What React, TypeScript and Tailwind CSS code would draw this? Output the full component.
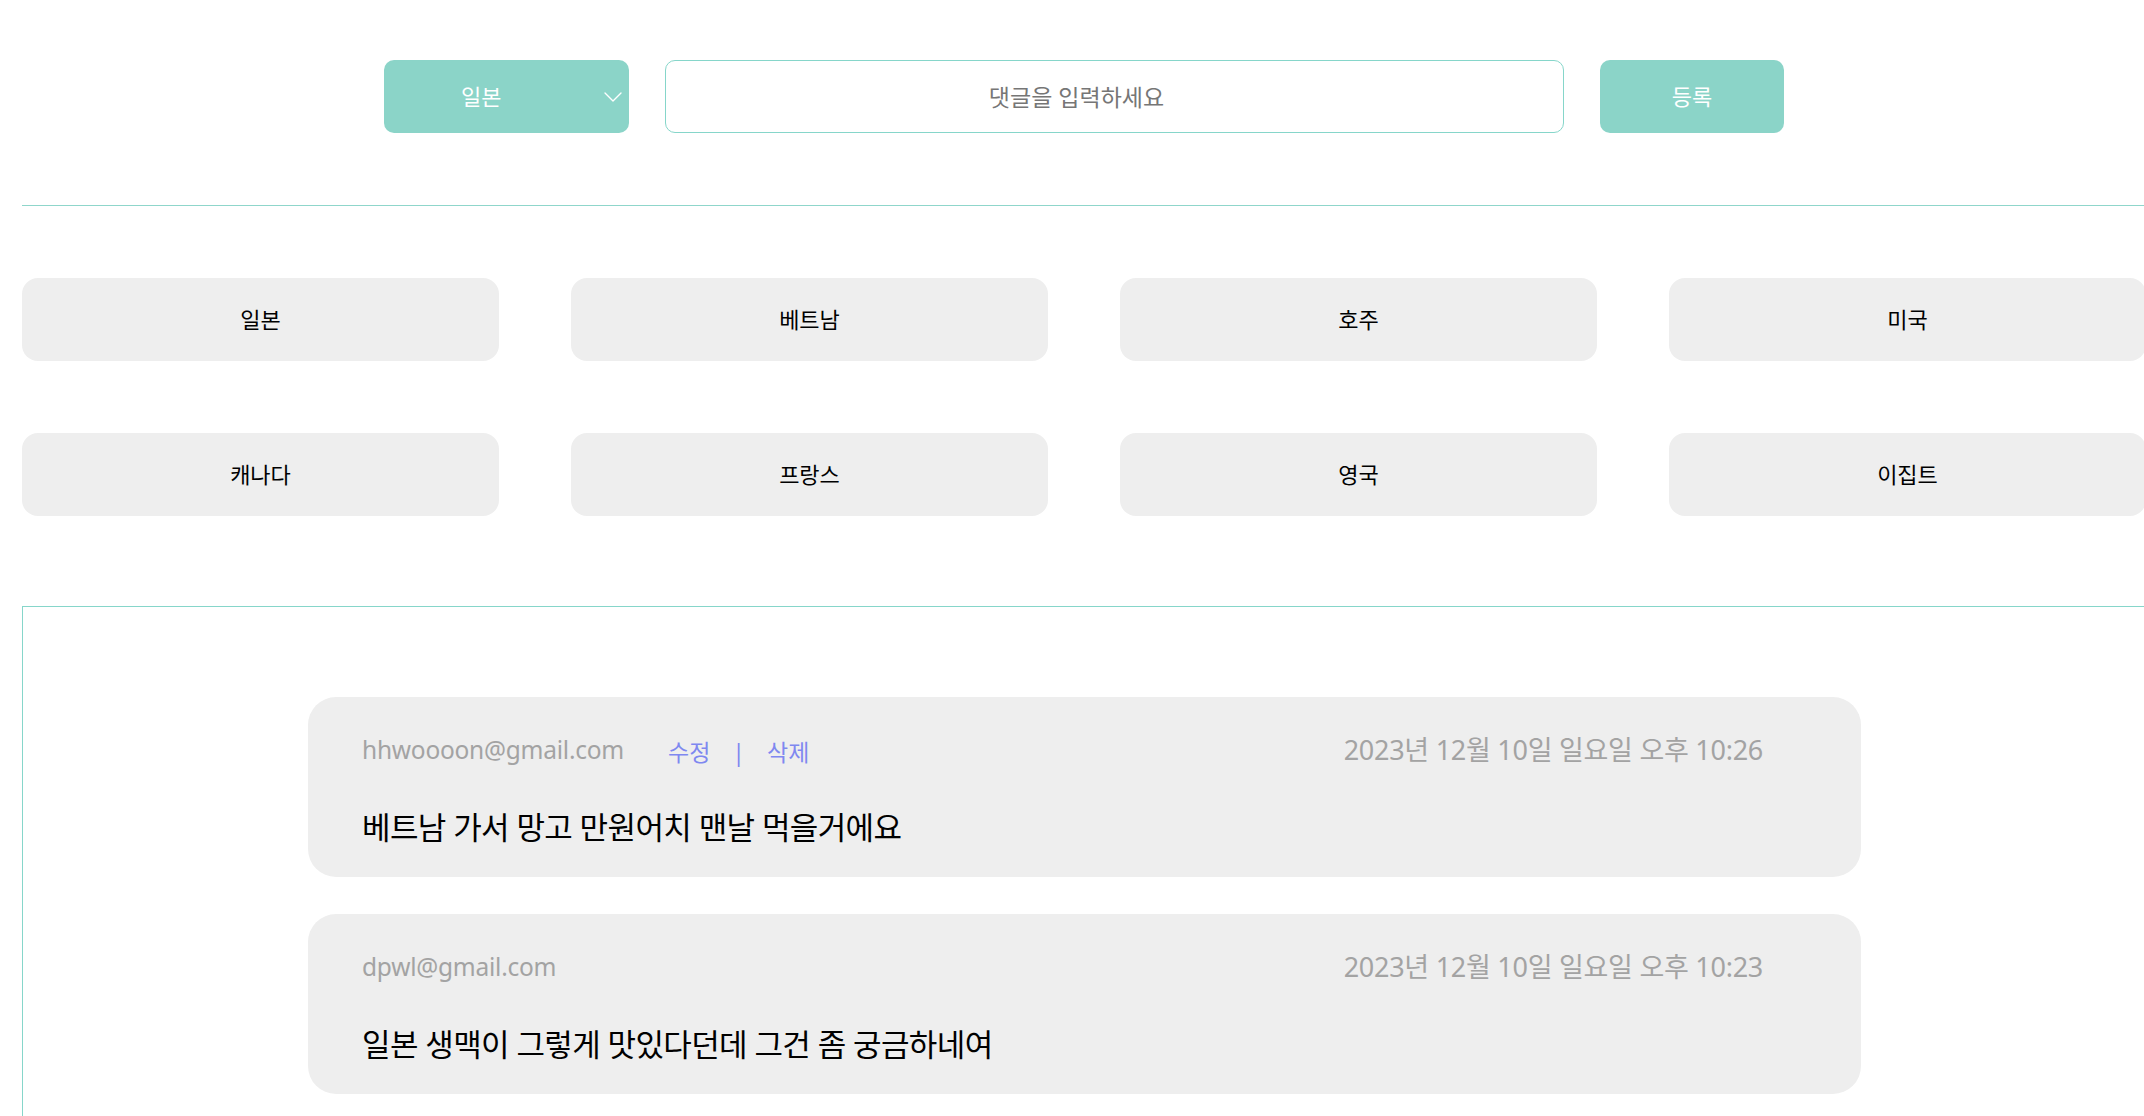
import React, { useState } from "react";
import { ChevronDown } from "lucide-react";

const countries = ["일본", "베트남", "호주", "미국", "캐나다", "프랑스", "영국", "이집트"];

interface Comment {
  id: number;
  email: string;
  date: string;
  text: string;
  mine: boolean;
}

const comments: Comment[] = [
  {
    id: 1,
    email: "hhwoooon@gmail.com",
    date: "2023년 12월 10일 일요일 오후 10:26",
    text: "베트남 가서 망고 만원어치 맨날 먹을거에요",
    mine: true,
  },
  {
    id: 2,
    email: "dpwl@gmail.com",
    date: "2023년 12월 10일 일요일 오후 10:23",
    text: "일본 생맥이 그렇게 맛있다던데 그건 좀 궁금하네여",
    mine: false,
  },
];

export default function App() {
  const [country, setCountry] = useState("일본");
  const [text, setText] = useState("");

  return (
    <div className="min-h-screen bg-white overflow-x-hidden font-['Noto_Sans','Noto_Sans_CJK_KR',sans-serif]">
      <div className="ml-[22px] w-[2124px]">
        {/* 입력 폼 */}
        <form
          onSubmit={(e) => e.preventDefault()}
          className="flex justify-center gap-[36px] pt-[60px]"
        >
          <div className="relative w-[245px] h-[73px]">
            <select
              value={country}
              onChange={(e) => setCountry(e.target.value)}
              className="appearance-none w-full h-full rounded-[10px] bg-[#8bd4c8] text-white text-[22px] pl-[77px] outline-none"
            >
              {countries.map((c) => (
                <option key={c} value={c}>
                  {c}
                </option>
              ))}
            </select>
            <ChevronDown
              className="absolute right-0 top-1/2 -translate-y-1/2 text-white pointer-events-none"
              size={32}
              strokeWidth={1}
            />
          </div>
          <input
            type="text"
            value={text}
            onChange={(e) => setText(e.target.value)}
            placeholder="댓글을 입력하세요"
            className="w-[899px] h-[73px] rounded-[10px] border border-[#86d6ca] text-center pr-[76px] text-[23px] text-[#555] placeholder:text-[#767676] outline-none"
          />
          <button
            type="submit"
            className="w-[184px] h-[73px] rounded-[10px] bg-[#8bd4c8] text-white text-[22px]"
          >
            등록
          </button>
        </form>

        <div className="mt-[72px] h-px bg-[#8fd6cb]" />

        {/* 나라 버튼 */}
        <div className="grid grid-cols-4 gap-[72px] mt-[72px]">
          {countries.map((c) => (
            <button
              key={c}
              className="h-[83px] rounded-[16px] bg-[#eeeeee] text-[22px] text-black"
            >
              {c}
            </button>
          ))}
        </div>

        {/* 댓글 목록 */}
        <div className="mt-[90px] border-l border-t border-[#86d6ca] pt-[90px] pb-[40px] flex flex-col items-center gap-[37px]">
          {comments.map((c) => (
            <div
              key={c.id}
              className="w-[1553px] rounded-[28px] bg-[#eeeeee] pl-[54px] pr-[98px] pt-[35px] pb-[30px]"
            >
              <div className="flex items-center justify-between h-[36px]">
                <div className="flex items-center">
                  <span className="text-[24.5px] text-[#a3a3a3] tracking-[-0.01em]">
                    {c.email}
                  </span>
                  {c.mine && (
                    <div className="flex items-center ml-[44px] text-[23px] text-[#7f88f0] mt-[4px]">
                      <button>수정</button>
                      <span className="mx-[22px]">|</span>
                      <button>삭제</button>
                    </div>
                  )}
                </div>
                <span className="text-[27px] text-[#a3a3a3] tracking-[-0.01em]">
                  {c.date}
                </span>
              </div>
              <p className="mt-[39px] text-[31px] leading-[40px] text-black tracking-[-0.02em]">
                {c.text}
              </p>
            </div>
          ))}
        </div>
      </div>
    </div>
  );
}
